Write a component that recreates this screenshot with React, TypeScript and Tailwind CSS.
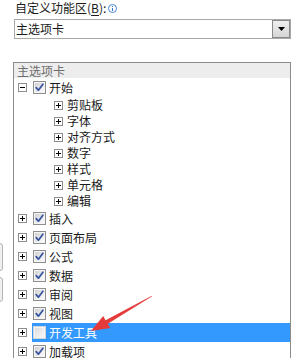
import React from "react";

function ExpandBox({ open = false }: { open?: boolean }) {
  return (
    <svg width="9" height="9" viewBox="0 0 9 9" shapeRendering="crispEdges" className="shrink-0">
      <rect x="0.5" y="0.5" width="8" height="8" fill="#ffffff" stroke="#8e8e8e" />
      <path d="M2 4.5h5" stroke="#000000" />
      {!open && <path d="M4.5 2v5" stroke="#000000" />}
    </svg>
  );
}

function CheckBox({ checked = true, id }: { checked?: boolean; id: string }) {
  return (
    <svg width="13" height="13" viewBox="0 0 13 13" className="shrink-0">
      <defs>
        <linearGradient id={id} x1="0" y1="0" x2="1" y2="1">
          <stop offset="0" stopColor={checked ? "#d2d2d2" : "#dedede"} />
          <stop offset="1" stopColor={checked ? "#fbfbfb" : "#f6f6f6"} />
        </linearGradient>
      </defs>
      <rect
        x="0.5"
        y="0.5"
        width="12"
        height="12"
        fill="#f5f5f5"
        stroke={checked ? "#8f8f8f" : "#d4d4d4"}
        shapeRendering="crispEdges"
      />
      <rect x="2" y="2" width="9" height="9" fill={`url(#${id})`} shapeRendering="crispEdges" />
      {checked && (
        <path
          d="M3.2 6.6 L5.4 9.2 L9.9 3.2"
          fill="none"
          stroke="#34529f"
          strokeWidth="1.7"
          strokeLinecap="round"
          strokeLinejoin="round"
        />
      )}
    </svg>
  );
}

function TopRow({
  label,
  checked = true,
  open = false,
  selected = false,
}: {
  label: string;
  checked?: boolean;
  open?: boolean;
  selected?: boolean;
}) {
  return (
    <div className="flex h-[19px] items-center pl-[4px]">
      <ExpandBox open={open} />
      <div
        className={
          selected
            ? "ml-[5px] flex h-full flex-1 items-center bg-[#3399ff] pl-[1px] text-white"
            : "ml-[5px] flex h-full flex-1 items-center pl-[1px] text-[#1a1a1a]"
        }
      >
        <CheckBox checked={checked} id={`cb-${label}`} />
        <span className="ml-[3px] leading-none">{label}</span>
      </div>
    </div>
  );
}

function SubRow({ label }: { label: string }) {
  return (
    <div className="flex h-[16px] items-center pl-[40px] text-[#1a1a1a]">
      <ExpandBox />
      <span className="ml-[4px] leading-none">{label}</span>
    </div>
  );
}

export default function App() {
  return (
    <div className="relative h-[358px] w-[293px] overflow-hidden bg-white font-['Noto_Sans_CJK_SC','Noto_Sans',sans-serif] text-[12px] text-[#1a1a1a]">
      <div className="flex h-[16px] items-center pl-[15px] leading-none">
        <span>
          自定义功能区(<span className="underline underline-offset-2">B</span>):
        </span>
        <svg width="9" height="9" viewBox="0 0 9 9" className="ml-[2px]">
          <circle cx="4.5" cy="4.5" r="4" fill="#ffffff" stroke="#4a86d8" strokeWidth="1" />
          <rect x="4" y="4" width="1" height="3" fill="#2f6fce" />
          <rect x="4" y="2" width="1" height="1" fill="#2f6fce" />
        </svg>
      </div>

      <div className="ml-[14px] mt-[3px] flex h-[20px] w-[277px] items-center border border-[#a9a9a9] bg-white">
        <span className="flex-1 pl-[1px] leading-none">主选项卡</span>
        <div className="flex h-[18px] w-[18px] items-center justify-center border border-[#8a8a8a] bg-gradient-to-b from-[#efefef] to-[#d6d6d6]">
          <svg width="7" height="4" viewBox="0 0 7 4">
            <path d="M0 0h7L3.5 4z" fill="#000000" />
          </svg>
        </div>
      </div>

      <div className="mt-[23px] flex">
        <div className="flex w-[13px] flex-col">
          <div className="ml-[-10px] mt-[181px] h-[28px] w-[13px] rounded-[3px] border border-[#b4b4b4] bg-[#f0f0f0]" />
          <div className="ml-[-10px] mt-[6px] h-[25px] w-[13px] rounded-[3px] border border-[#b4b4b4] bg-[#f0f0f0]" />
        </div>
        <div className="h-[310px] w-[278px] border border-[#8c8c8c] bg-white">
          <div className="flex h-[15px] items-center bg-[#ededed] pl-[3px] leading-none text-[#6e6e6e]">
            主选项卡
          </div>
          <TopRow label="开始" open />
          <SubRow label="剪贴板" />
          <SubRow label="字体" />
          <SubRow label="对齐方式" />
          <SubRow label="数字" />
          <SubRow label="样式" />
          <SubRow label="单元格" />
          <SubRow label="编辑" />
          <TopRow label="插入" />
          <TopRow label="页面布局" />
          <TopRow label="公式" />
          <TopRow label="数据" />
          <TopRow label="审阅" />
          <TopRow label="视图" />
          <TopRow label="开发工具" checked={false} selected />
          <TopRow label="加载项" />
        </div>
      </div>

      <svg
        className="pointer-events-none absolute left-0 top-0"
        width="293"
        height="358"
        viewBox="0 0 293 358"
      >
        <polygon
          points="91,331 103.2,316 105.6,320.2 151.85,295.74 152.15,296.26 107.8,323.8 110.2,328"
          fill="#e53a3a"
        />
      </svg>
    </div>
  );
}
